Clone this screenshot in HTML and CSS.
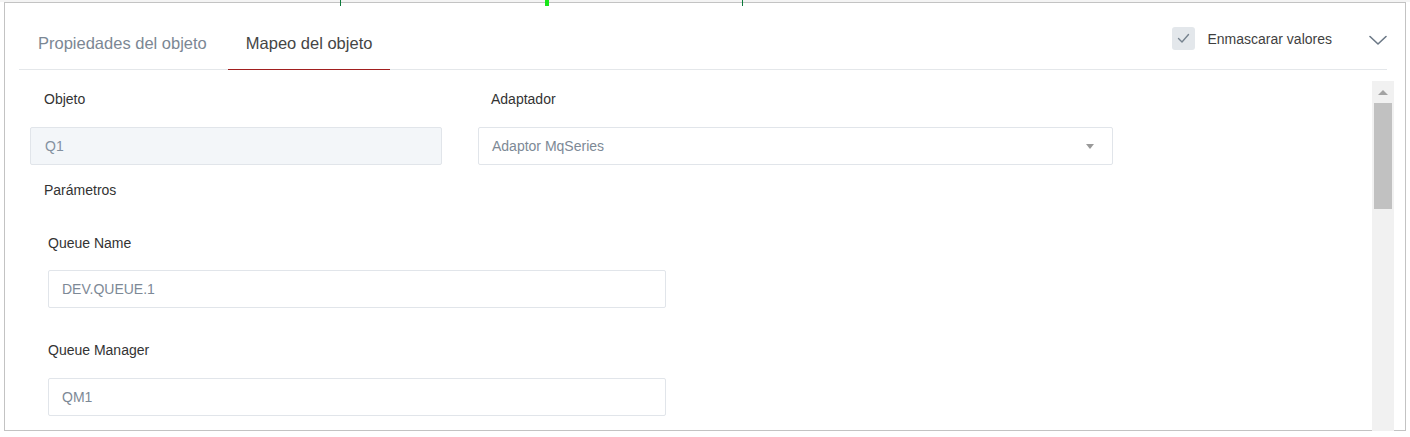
FILE: index.html
```html
<!DOCTYPE html>
<html lang="es">
<head>
<meta charset="utf-8">
<title>Mapeo del objeto</title>
<link rel="stylesheet" href="styles.css">
</head>
<body>
<div class="topstrip"></div>
<div class="ticks">
  <span class="tick tick-a"></span>
  <span class="tick tick-b"></span>
  <span class="tick tick-c"></span>
</div>
<div class="frame">
  <div class="header">
    <div class="tabs">
      <div class="tab">Propiedades del objeto</div>
      <div class="tab active">Mapeo del objeto</div>
    </div>
    <div class="tools">
      <label class="mask">
        <span class="checkbox">
          <svg width="23" height="23" viewBox="0 0 23 23"><polyline points="6.5,11.5 10,15 16.5,7.5" fill="none" stroke="#76838f" stroke-width="1.4" stroke-linecap="round" stroke-linejoin="round"/></svg>
        </span>
        <span class="mask-text">Enmascarar valores</span>
      </label>
      <span class="chevron">
        <svg width="18" height="10" viewBox="0 0 18 10"><polyline points="1,1.5 9,9 17,1.5" fill="none" stroke="#6b7886" stroke-width="1.6" stroke-linecap="round" stroke-linejoin="round"/></svg>
      </span>
    </div>
  </div>
  <div class="content">
    <div class="row">
      <div class="col col-obj">
        <div class="label">Objeto</div>
        <div class="input readonly">Q1</div>
      </div>
      <div class="col col-adp">
        <div class="label">Adaptador</div>
        <div class="input select">Adaptor MqSeries<span class="caret"></span></div>
      </div>
    </div>
    <div class="label section">Parámetros</div>
    <div class="params">
      <div class="field">
        <div class="label">Queue Name</div>
        <div class="input">DEV.QUEUE.1</div>
      </div>
      <div class="field">
        <div class="label">Queue Manager</div>
        <div class="input">QM1</div>
      </div>
    </div>
  </div>
  <div class="scrollbar">
    <span class="arrow-up"></span>
    <span class="thumb"></span>
  </div>
</div>
</body>
</html>
```

FILE: styles.css
```css
* { box-sizing: border-box; }

html, body {
  margin: 0;
  padding: 0;
  background: #ffffff;
  font-family: "Liberation Sans", Arial, sans-serif;
  color: #333;
  overflow: hidden;
}

.topstrip {
  height: 2px;
  background: #f4f4f4;
}

.ticks {
  position: absolute;
  top: 0;
  left: 0;
  width: 100%;
  height: 6px;
  z-index: 5;
}
.tick {
  position: absolute;
  top: 0;
  height: 6px;
  width: 1px;
  background: #0b7a3b;
}
.tick-a { left: 340px; }
.tick-b { left: 545px; width: 4px; background: #19e619; }
.tick-c { left: 742px; }

.frame {
  position: relative;
  margin: 0 4px;
  width: 1402px;
  height: 429px;
  border: 1px solid #c3c3c3;
  background: #fff;
}

.header {
  display: flex;
  justify-content: space-between;
  margin: 0 18px 0 14px;
  border-bottom: 1px solid #e4e7ea;
}

.tabs {
  display: flex;
  gap: 3px;
  padding-left: 1px;
}
.tab {
  padding: 30px 18px 16px;
  line-height: 20px;
  font-size: 16.5px;
  color: #7b8794;
  border-bottom: 1px solid transparent;
  margin-bottom: -1px;
  white-space: nowrap;
}
.tab.active {
  color: #454545;
  border-bottom-color: #a11f1f;
}

.tools {
  display: flex;
  align-items: flex-start;
  padding-top: 24px;
}
.mask {
  display: flex;
  align-items: center;
  gap: 13px;
}
.checkbox {
  display: block;
  width: 23px;
  height: 23px;
  border-radius: 3px;
  background: #e3e7eb;
}
.checkbox svg { display: block; }
.mask-text {
  font-size: 14px;
  line-height: 20px;
  color: #3f3f3f;
}
.chevron {
  display: block;
  margin-left: 37px;
  padding-top: 8px;
}
.chevron svg { display: block; }

.content {
  padding: 19px 0 0 25px;
}

.row {
  display: flex;
  gap: 36px;
}
.col-obj { width: 412px; }
.col-adp { width: 635px; }

.label {
  font-size: 14px;
  line-height: 20px;
  color: #333;
  padding-left: 14px;
  margin-bottom: 18px;
}
.col-adp .label { padding-left: 13px; }

.input {
  height: 38px;
  border: 1px solid #e1e5ea;
  border-radius: 2px;
  font-size: 14px;
  line-height: 36px;
  color: #7d8996;
  padding: 0 13px;
  background: #fff;
}
.input.readonly {
  background: #f3f6f9;
  padding-left: 14px;
  color: #8391a0;
}
.input.select {
  display: flex;
  align-items: center;
  justify-content: space-between;
  padding-right: 18px;
}
.caret {
  width: 0;
  height: 0;
  border-left: 4px solid transparent;
  border-right: 4px solid transparent;
  border-top: 5px solid #9a9a9a;
}

.section {
  margin-top: 15px;
  margin-bottom: 0;
}

.params {
  padding-left: 18px;
  width: 636px;
}
.field {
  padding-top: 33px;
}
.field + .field { padding-top: 32px; }
.field .label {
  padding-left: 0;
  margin-bottom: 17px;
}
.field + .field .label { margin-bottom: 18px; }

.scrollbar {
  position: absolute;
  left: 1367px;
  top: 78px;
  width: 22px;
  height: 360px;
  background: #f1f1f1;
  z-index: 3;
}
.arrow-up {
  position: absolute;
  left: 6px;
  top: 9px;
  width: 0;
  height: 0;
  border-left: 5px solid transparent;
  border-right: 5px solid transparent;
  border-bottom: 5px solid #a3a3a3;
}
.thumb {
  position: absolute;
  left: 2px;
  top: 22px;
  width: 18px;
  height: 106px;
  background: #c1c1c1;
}
```
